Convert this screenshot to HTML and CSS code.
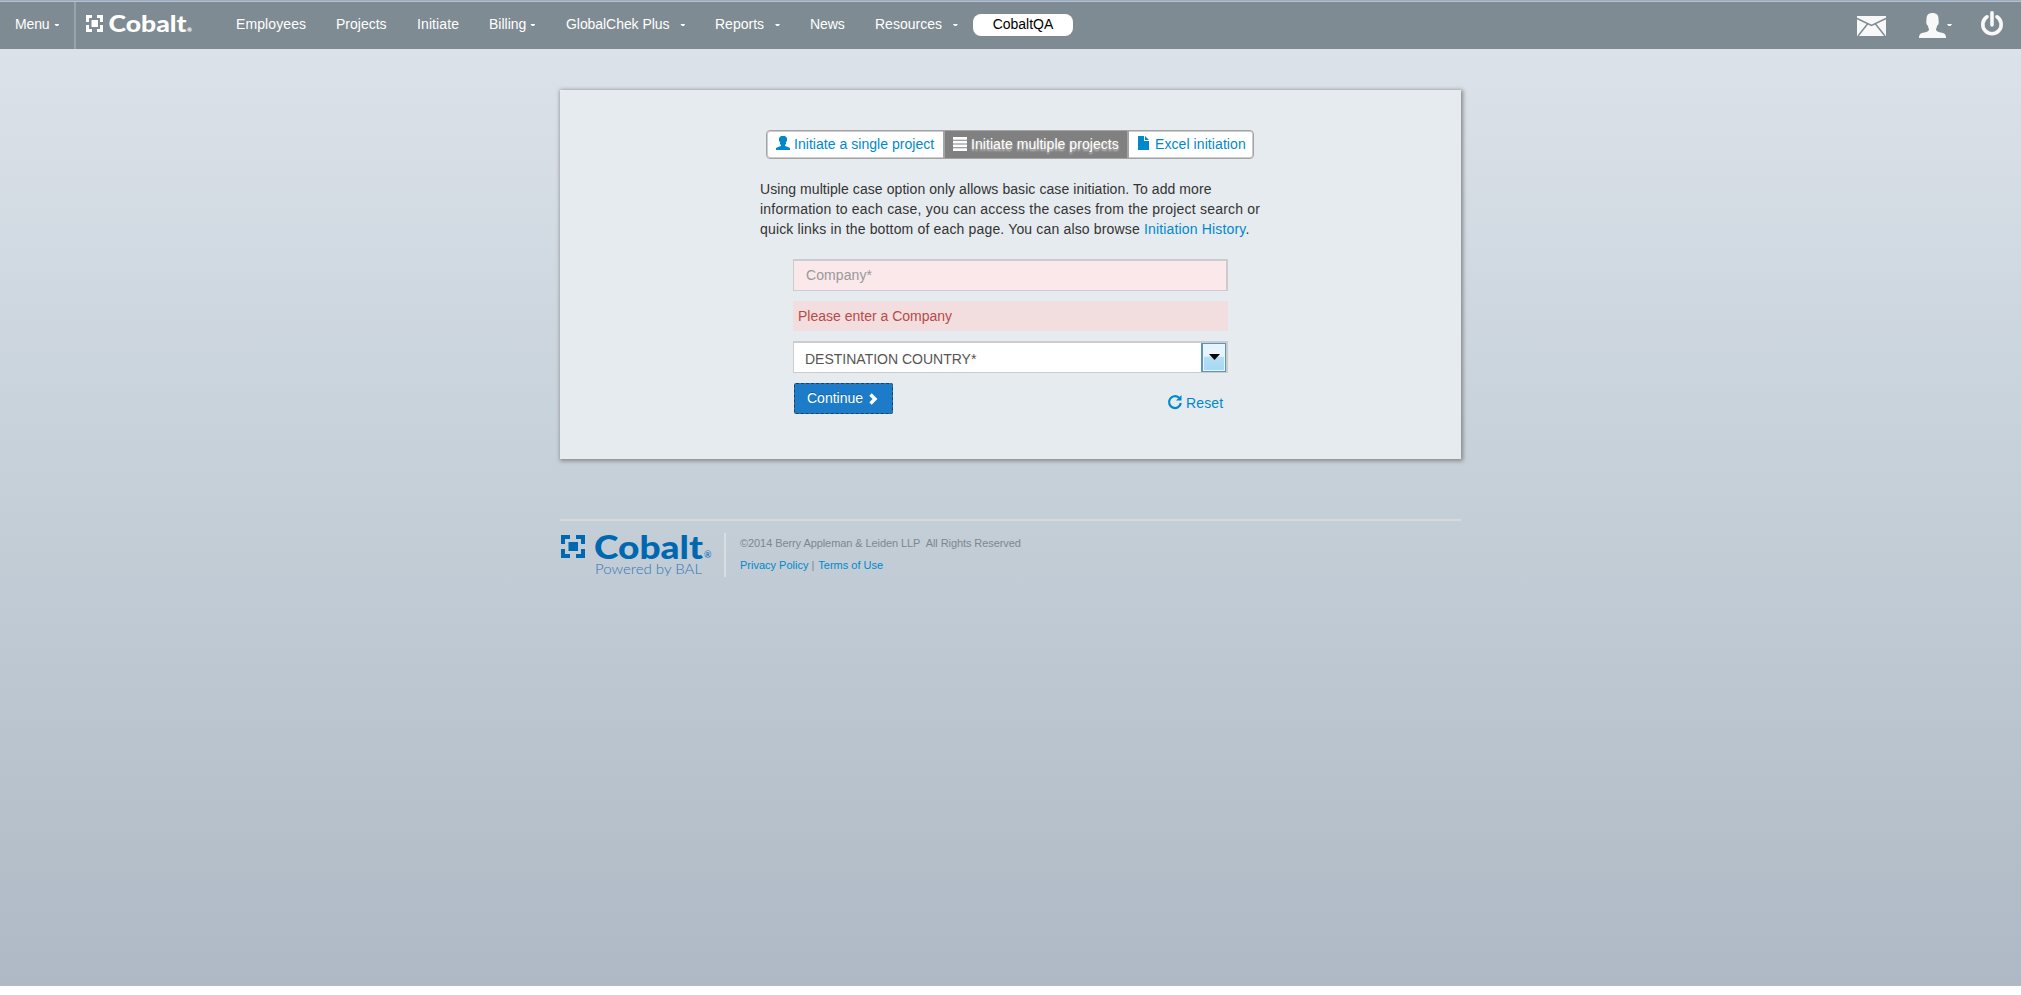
FILE: index.html
```html
<!DOCTYPE html>
<html lang="en">
<head>
<meta charset="utf-8">
<title>Cobalt - Initiate multiple projects</title>
<link rel="stylesheet" href="styles.css">
</head>
<body>
<div class="page">
  <header class="navbar">
    <a class="nav-item menu">Menu<i class="caret"></i></a>
    <a class="brand">
      <svg width="118" height="30" viewBox="0 0 118 30">
        <path fill="#fff" d="M0 3h6v3H3v4H0zM11 3h6v7h-3V6h-3zM0 13h3v4h3v3H0zM14 13h3v7h-6v-3h3zM5.500 8h6.500v7H5.500z"/>
        <text class="logo-word light" x="22.500" y="20" font-size="22" textLength="78" lengthAdjust="spacingAndGlyphs">Cobalt</text>
        <text class="logo-word light" x="101" y="20" font-size="6">®</text>
      </svg>
    </a>
    <nav class="links">
      <a class="nav-item employees">Employees</a>
      <a class="nav-item projects">Projects</a>
      <a class="nav-item initiate">Initiate</a>
      <a class="nav-item billing">Billing<i class="caret"></i></a>
      <a class="nav-item chek">GlobalChek Plus<i class="caret wide"></i></a>
      <a class="nav-item reports">Reports<i class="caret wide"></i></a>
      <a class="nav-item news">News</a>
      <a class="nav-item resources">Resources<i class="caret wide"></i></a>
      <a class="pill">CobaltQA</a>
    </nav>
    <div class="tools">
      <svg class="mail" width="29" height="20" viewBox="0 0 29 20"><path fill="#f8f8f8" d="M0 0h29v20H0z"/><path d="M0 2.500L14.500 9.500L29 2.500M10.500 8L1 20M18.500 8L28 20" fill="none" stroke="#7f8b93" stroke-width="1.500"/></svg>
      <svg class="user" width="27" height="25" viewBox="0 0 27 25"><path fill="#f8f8f8" d="M13.500 0c4 0 6 2 6 6 0 2 .4 2 .2 4-.3 2-1.400 2-1.800 3.500-.4 2-.9 2-.9 3.500 1 2 4 2 7 3 2.500 1 3 2.500 3 5H0c0-2.500.5-4 3-5 3-1 6-1 7-3 0-1.500-.5-1.500-.9-3.500C8.700 12 7.600 12 7.300 10c-.2-2 .2-2 .2-4 0-4 2-6 6-6z"/></svg>
      <i class="caret"></i>
      <svg class="power" width="22" height="25" viewBox="0 0 22 25"><path d="M6 5.800A9.200 9.200 0 1 0 16 5.800M11 1.800V14" fill="none" stroke="#f8f8f8" stroke-width="3.600" stroke-linecap="round"/></svg>
    </div>
  </header>

  <main class="card">
    <div class="tabs">
      <a class="tab single"><svg width="14" height="14" viewBox="0 0 14 14"><path fill="currentColor" d="M5 0h4l2 2v3l-1 1v2L9 9v1l3 1 2 1v2H0v-2l2-1 3-1V9L4 8V6L3 5V2z"/></svg><span>Initiate a single project</span></a>
      <a class="tab multiple active"><svg width="14" height="14" viewBox="0 0 14 14"><path fill="currentColor" d="M0 0h14v2.800H0zM0 3.700h14v2.800H0zM0 7.500h14v2.800H0zM0 11.200h14v2.800H0z"/></svg><span>Initiate multiple projects</span></a>
      <a class="tab excel"><svg width="11" height="14" viewBox="0 0 11 14"><path fill="currentColor" d="M0 0h6v5h5v9H0zM7 0l4 4H7z"/></svg><span>Excel initiation</span></a>
    </div>
    <p class="intro"><span class="line l1">Using multiple case option only allows basic case initiation. To add more</span><span class="line l2">information to each case, you can access the cases from the project search or</span><span class="line l3">quick links in the bottom of each page. You can also browse <a>Initiation History</a>.</span></p>
    <form class="form">
      <div class="field invalid"><span>Company*</span></div>
      <div class="error"><span>Please enter a Company</span></div>
      <div class="field select"><span>DESTINATION COUNTRY*</span><b class="drop"><svg width="11" height="6" viewBox="0 0 11 6"><path d="M0 0h11L5.500 6z"/></svg></b></div>
      <div class="actions">
        <a class="continue"><span>Continue</span><svg width="9" height="12" viewBox="0 0 9 12"><path d="M1.500 1.500L6 6l-4.500 4.500" fill="none" stroke="#fff" stroke-width="3.400"/></svg></a>
        <a class="reset"><svg width="14" height="14" viewBox="0 0 14 14"><path d="M11 2.800A5.900 5.900 0 1 0 12.800 8" fill="none" stroke="currentColor" stroke-width="2.200"/><path fill="currentColor" d="M13.500 0v5.500H8z"/></svg><span>Reset</span></a>
      </div>
    </form>
  </main>

  <footer class="footer">
    <svg class="foot-logo" width="164" height="48" viewBox="0 0 164 48">
      <path fill="#0067b1" d="M1 3h9v4H5v5H1zM16 3h9v9h-4V7h-5zM1 17h4v5h5v4H1zM21 17h4v9h-9v-4h5zM8.500 10h9.500v9H8.500z"/>
      <text class="logo-word" x="34" y="26.500" font-size="32" textLength="109" lengthAdjust="spacingAndGlyphs">Cobalt</text>
      <text class="logo-word registered" x="144" y="26" font-size="9">®</text>
      <text class="powered" x="35" y="42" font-size="13" textLength="107" lengthAdjust="spacingAndGlyphs">Powered by BAL</text>
    </svg>
    <div class="legal">
      <div class="copy">©2014 Berry Appleman &amp; Leiden LLP&nbsp; All Rights Reserved</div>
      <div class="policy"><a class="privacy">Privacy Policy</a><i>|</i><a class="terms">Terms of Use</a></div>
    </div>
  </footer>
</div>
</body>
</html>
```
FILE: styles.css
```css
* { box-sizing: border-box; }
body { margin: 0; background: #fff; font: 14px/20px "Liberation Sans", Arial, sans-serif; color: #333; }
svg { display: block; flex: none; overflow: visible; }
i { font-style: normal; }
.page { height: 986px; background: linear-gradient(#dce2ea 49px, #c5d0d9 480px, #aeb9c5 986px); }

.navbar { height: 49px; display: flex; background: #7f8b93; border-top: 1px solid #9babc2; box-shadow: inset 0 1px #b4c1d0; color: #fff; }
.nav-item { flex: none; padding-top: 13px; height: 48px; white-space: nowrap; display: flex; }
.caret { width: 5px; height: 2px; margin: 10px 0 0 5px; background: #fff; clip-path: polygon(0 0, 100% 0, 70% 100%, 30% 100%); flex: none; }
.caret.wide { margin-left: 12px; }
.menu { width: 76px; height: 47px; margin-top: 1px; padding: 12px 0 0 15px; border-right: 2px solid #98a4ac; letter-spacing: -.15px; }
.brand { width: 160px; padding: 11px 0 0 10px; flex: none; }
.logo-word { font-family: Lato, "Open Sans", sans-serif; font-weight: 900; fill: #0067b1; }
.logo-word.light { fill: #fff; }
.logo-word.registered { font-weight: 400; }
.powered { font-family: Lato, sans-serif; fill: #3378b5; font-weight: 300; }
.links { display: flex; flex: none; }
.employees { width: 100px; letter-spacing: .1px; }
.projects { width: 81px; }
.initiate { width: 72px; letter-spacing: .1px; }
.billing { width: 77px; }
.billing .caret { margin-left: 4px; }
.chek { width: 149px; letter-spacing: -.06px; }
.chek .caret { margin-left: 11px; }
.reports { width: 95px; }
.reports .caret, .resources .caret { margin-left: 11px; }
.news { width: 65px; letter-spacing: -.1px; }
.resources { width: 98px; }
.pill { height: 22px; width: 100px; margin-top: 13px; border-radius: 8px; background: #fff; color: #000; text-align: center; }
.tools { display: flex; margin-left: auto; padding-right: 18px; }
.mail { margin: 15px 33px 0 0; }
.user { margin-top: 12px; }
.tools .caret { margin: 23px 29px 0 1px; }
.power { margin-top: 10px; }

.card { width: 901px; height: 369px; margin: 41px 0 0 560px; padding-top: 40px; background: #e6ebef; box-shadow: 1px 1px 4px 1px #888; }
a { color: #0088cc; }
.navbar a { color: #fff; }
.navbar .pill { color: #000; }
.tabs { display: flex; width: 488px; height: 29px; margin-left: 206px; border: 1px solid #a4a4a4; border-radius: 4px; background: #fff; overflow: hidden; box-shadow: inset 0 0 0 1px #ccc; }
.tab { display: flex; height: 27px; padding: 5px 0 0 9px; line-height: 18px; white-space: nowrap; }
.tab span { margin: -1px 0 0 4px; }
.single { width: 176px; }
.single span { letter-spacing: .04px; }
.multiple { width: 186px; }
.multiple span { letter-spacing: .06px; }
.active { background: #808080; color: #fff; border: 2px solid #a4a4a4; border-width: 0 2px; padding-left: 8px; text-shadow: 0 2px 2px #ccc; }
.tabs .active { color: #fff; }
.active svg { margin-top: 1px; }
.excel span { margin-left: 6px; letter-spacing: .08px; }
.intro { margin: 20px 0 0 200px; height: 60px; }
.line { display: block; white-space: nowrap; }
.l1 { letter-spacing: .07px; }
.l2 { letter-spacing: .21px; }
.l3 { letter-spacing: .16px; }
.form { width: 435px; margin: 20px 0 0 233px; }
.field { display: flex; height: 32px; border: 1px solid #ccc; border-top-width: 2px; border-right-width: 2px; background: #fff; }
.invalid { background: #fbe8eb; color: #999; padding: 4px 0 0 12px; letter-spacing: .08px; }
.error { height: 30px; margin: 10px 0; padding: 5px 0 0 5px; background: #f2dede; color: #b94a48; }
.select { padding-left: 11px; color: #555; }
.select span { padding-top: 6px; white-space: nowrap; }
.drop { width: 25px; height: 29px; margin-left: auto; padding: 11px 0 0 6px; border: 1px solid #5b94c0; border-left-width: 2px; background: linear-gradient(#e7f4fc 45%, #b5def5 50%, #a5d8f3); box-shadow: inset 0 0 0 1px #eaf6fd; }
.drop svg { margin-top: -1px; }
.actions { display: flex; margin-top: 10px; }
.continue { display: flex; width: 99px; height: 31px; margin-left: 1px; padding: 4px 0 0 12px; border: 1px dashed #283f50; border-radius: 2px; background: #1c7cca; text-shadow: 0 -1px #12659e; }
.actions .continue { color: #fff; }
.continue svg { margin: 5px 0 0 6px; }
.reset { display: flex; margin: 12px 0 0 275px; }
.reset span { margin-left: 4px; margin-top: -2px; letter-spacing: .15px; }

.footer { width: 901px; margin: 60px 0 0 560px; display: flex; border-top: 2px solid #d7dadd; padding-top: 12px; }
.foot-logo { margin: -1px 0 0; }
.legal { height: 44px; padding-left: 14px; border-left: 2px solid #dadde0; font-size: 11px; line-height: 22px; color: #7c888f; white-space: nowrap; }
.copy { margin-top: -1px; letter-spacing: -.08px; }
.policy { display: flex; }
.policy i { margin: 0 4px 0 3px; }
```
